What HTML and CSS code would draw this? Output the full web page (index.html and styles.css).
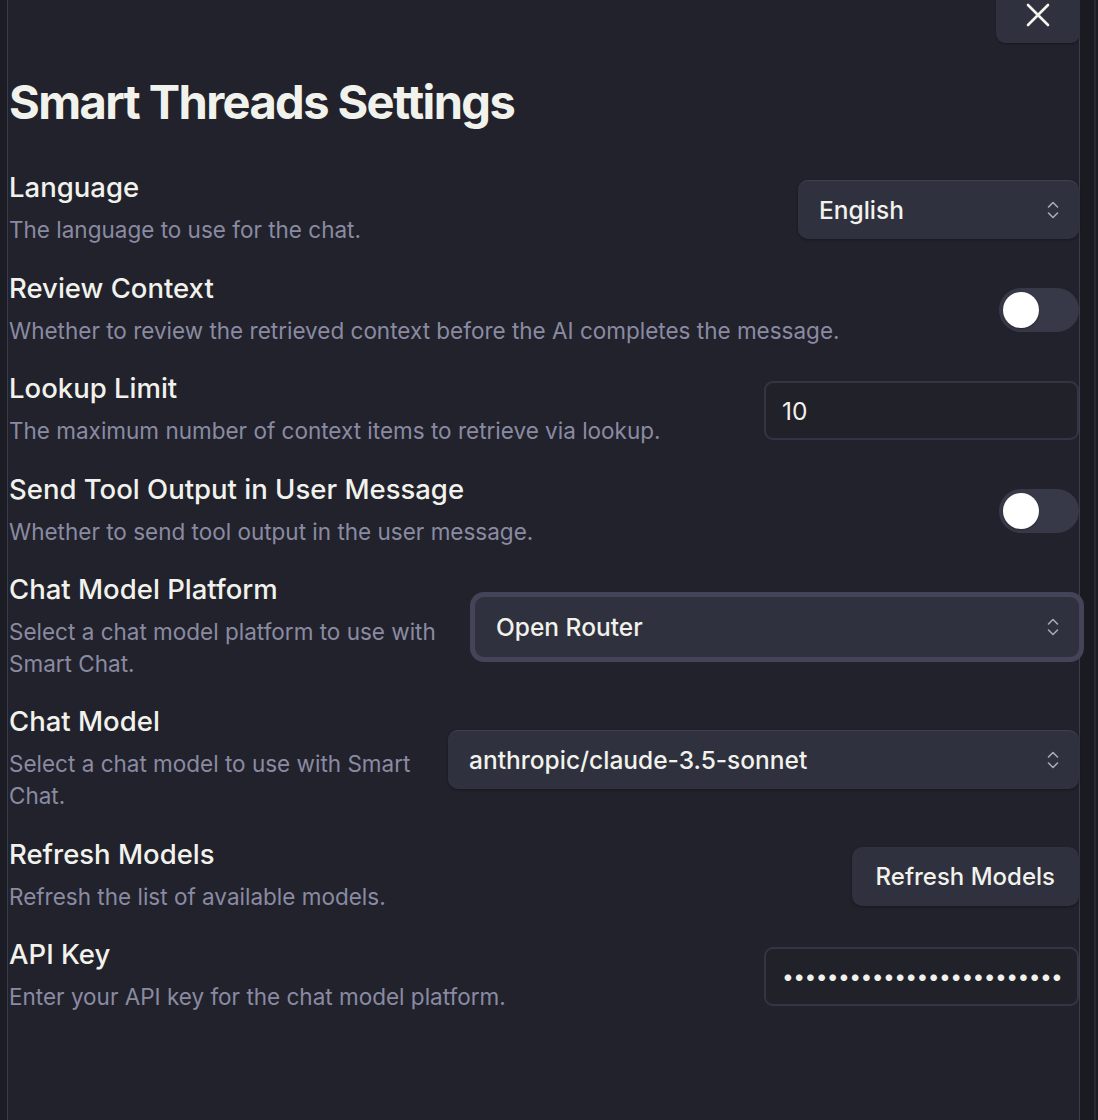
FILE: index.html
```html
<!DOCTYPE html>
<html lang="en">
<head>
    <meta charset="UTF-8">
    <meta name="viewport" content="width=device-width, initial-scale=1.0">
    <title>Smart Threads Settings</title>
    <link rel="stylesheet" href="styles.css">
</head>
<body>
    <div class="modal">
        <div class="modal-header">
            <button class="close" aria-label="Close">
                <svg width="24" height="24" viewBox="0 0 24 24">
                    <path d="M2 2 L22 22 M22 2 L2 22" stroke="#f4f4ee" stroke-width="2.6" stroke-linecap="round"/>
                </svg>
            </button>
        </div>

        <h1 class="title">Smart Threads Settings</h1>

        <div class="setting">
            <div class="info">
                <div class="name">Language</div>
                <div class="desc">The language to use for the chat.</div>
            </div>
            <div class="control dropdown w-lang">
                <select><option>English</option></select>
                <svg class="chevron" width="16" height="24" viewBox="0 0 16 24">
                    <path d="M3.5 9 L8 4.5 L12.5 9 M3.5 15 L8 19.5 L12.5 15" fill="none" stroke="#a9aab8" stroke-width="1.6" stroke-linecap="round" stroke-linejoin="round"/>
                </svg>
            </div>
        </div>

        <div class="setting">
            <div class="info">
                <div class="name">Review Context</div>
                <div class="desc">Whether to review the retrieved context before the AI completes the message.</div>
            </div>
            <div class="control toggle"><span class="knob"></span></div>
        </div>

        <div class="setting">
            <div class="info">
                <div class="name">Lookup Limit</div>
                <div class="desc">The maximum number of context items to retrieve via lookup.</div>
            </div>
            <input class="control text-input w-input" type="text" value="10">
        </div>

        <div class="setting">
            <div class="info">
                <div class="name">Send Tool Output in User Message</div>
                <div class="desc">Whether to send tool output in the user message.</div>
            </div>
            <div class="control toggle"><span class="knob"></span></div>
        </div>

        <div class="setting">
            <div class="info">
                <div class="name">Chat Model Platform</div>
                <div class="desc">Select a chat model platform to use with Smart Chat.</div>
            </div>
            <div class="control dropdown focused w-platform">
                <select><option>Open Router</option></select>
                <svg class="chevron" width="16" height="24" viewBox="0 0 16 24">
                    <path d="M3.5 9 L8 4.5 L12.5 9 M3.5 15 L8 19.5 L12.5 15" fill="none" stroke="#a9aab8" stroke-width="1.6" stroke-linecap="round" stroke-linejoin="round"/>
                </svg>
            </div>
        </div>

        <div class="setting">
            <div class="info">
                <div class="name">Chat Model</div>
                <div class="desc">Select a chat model to use with Smart Chat.</div>
            </div>
            <div class="control dropdown w-model">
                <select><option>anthropic/claude-3.5-sonnet</option></select>
                <svg class="chevron" width="16" height="24" viewBox="0 0 16 24">
                    <path d="M3.5 9 L8 4.5 L12.5 9 M3.5 15 L8 19.5 L12.5 15" fill="none" stroke="#a9aab8" stroke-width="1.6" stroke-linecap="round" stroke-linejoin="round"/>
                </svg>
            </div>
        </div>

        <div class="setting">
            <div class="info">
                <div class="name">Refresh Models</div>
                <div class="desc">Refresh the list of available models.</div>
            </div>
            <button class="control btn">Refresh Models</button>
        </div>

        <div class="setting">
            <div class="info">
                <div class="name">API Key</div>
                <div class="desc">Enter your API key for the chat model platform.</div>
            </div>
            <input class="control text-input password w-input" type="password" value="sk-or-v1-0000000000000000000000000000000000">
        </div>
    </div>
    <div class="scroll-strip"></div>
</body>
</html>
```

FILE: styles.css
```css
body {
    margin: 0;
    padding: 0;
    background: #1c1c24;
    font-family: Inter, "Noto Sans", sans-serif;
    color: #f2f2ec;
    display: flex;
    height: 1120px;
    overflow: hidden;
}
.modal {
    margin-left: 7px;
    width: 1073px;
    height: 1140px;
    background: #22222c;
    border-left: 1px solid #3a3b4b;
    border-right: 1px solid #3a3b4b;
    border-bottom-left-radius: 12px;
    padding-left: 1px;
    box-sizing: border-box;
}
.scroll-strip {
    width: 14px;
    background: #1a1a21;
    border-right: 2px solid #2a2a33;
}
.modal-header {
    display: flex;
    justify-content: flex-end;
    height: 43px;
}
.close {
    width: 84px;
    height: 43px;
    border: none;
    border-radius: 0 0 9px 9px;
    background: #30313e;
    box-shadow: 0 1px 2px rgba(0, 0, 0, 0.35);
    display: flex;
    align-items: center;
    justify-content: center;
    padding: 0 0 14px 0;
    margin-right: -1px;
    cursor: pointer;
}
.title {
    margin: 31px 0 27px 0;
    font-size: 47px;
    line-height: 1.2;
    font-weight: 700;
    letter-spacing: -1.6px;
}
.setting {
    display: flex;
    align-items: center;
    gap: 20px;
    padding: 12px 0 11.4px 0;
}
.info {
    flex: 1;
    min-width: 0;
}
.name {
    font-size: 27.5px;
    line-height: 36px;
    font-weight: 500;
    margin-bottom: 9px;
}
.desc {
    font-size: 22.5px;
    line-height: 32px;
    color: #8a8ba2;
}
.control {
    flex: none;
    box-sizing: border-box;
    margin-top: 4px;
}
.w-lang { width: 281px; }
.w-input { width: 315px; }
.w-platform { width: 604px; }
.w-model { width: 631px; }

.dropdown {
    position: relative;
    height: 59px;
}
.dropdown select {
    appearance: none;
    width: 100%;
    height: 100%;
    border: none;
    border-radius: 10px;
    background: #30313e;
    box-shadow: inset 0 1px 0 #3e3f4f, 0 1px 3px rgba(0, 0, 0, 0.35);
    color: #f2f2ec;
    font-family: inherit;
    font-size: 24.5px;
    font-weight: 500;
    padding: 0 50px 0 21px;
    outline: none;
}
.dropdown.focused {
    height: 60px;
}
.dropdown.focused select {
    box-shadow: 0 0 0 5px #434458;
    border-radius: 9px;
}
.chevron {
    position: absolute;
    right: 18px;
    top: 18px;
}
.toggle {
    width: 80px;
    height: 44px;
    border-radius: 22px;
    background: #383948;
    padding: 4px;
}
.knob {
    display: block;
    width: 36px;
    height: 36px;
    border-radius: 50%;
    background: #ffffff;
    box-shadow: 0 1px 2px rgba(0, 0, 0, 0.3);
}
.text-input {
    height: 59px;
    border: 2px solid #343544;
    border-radius: 9px;
    background: #21212a;
    color: #f2f2ec;
    font-family: inherit;
    font-size: 24.5px;
    padding: 0 16px;
    outline: none;
}
.password {
    font-size: 21px;
    letter-spacing: -0.6px;
}
.btn {
    height: 59px;
    padding: 0 24px;
    border: none;
    border-radius: 10px;
    background: #30313e;
    box-shadow: 0 1px 3px rgba(0, 0, 0, 0.4);
    color: #f2f2ec;
    font-family: inherit;
    font-size: 24px;
    font-weight: 500;
    cursor: pointer;
}
```
